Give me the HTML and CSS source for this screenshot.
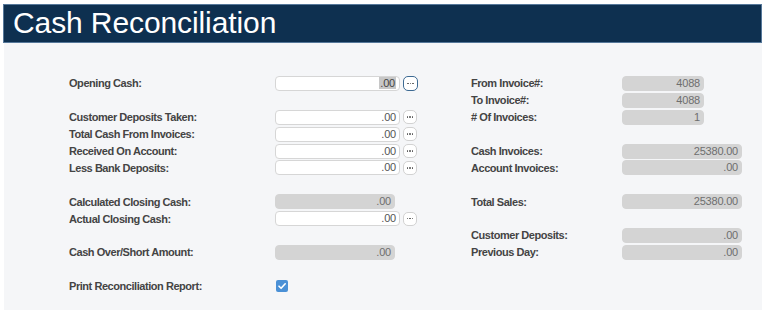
FILE: index.html
```html
<!DOCTYPE html>
<html>
<head>
<meta charset="utf-8">
<link rel="stylesheet" href="styles.css">
</head>
<body>
<div class="page">
  <header class="titlebar"><h1>Cash Reconciliation</h1></header>
  <main class="panel">
    <section class="col col-left">
      <div class="label">Opening Cash:</div>
      <div class="field input"><span class="sel">.00</span></div>
      <div class="more focus"><i></i><i></i><i></i></div>

      <div class="spacer"></div>

      <div class="label">Customer Deposits Taken:</div>
      <div class="field input">.00</div>
      <div class="more"><i></i><i></i><i></i></div>

      <div class="label">Total Cash From Invoices:</div>
      <div class="field input">.00</div>
      <div class="more"><i></i><i></i><i></i></div>

      <div class="label">Received On Account:</div>
      <div class="field input">.00</div>
      <div class="more"><i></i><i></i><i></i></div>

      <div class="label">Less Bank Deposits:</div>
      <div class="field input">.00</div>
      <div class="more"><i></i><i></i><i></i></div>

      <div class="spacer"></div>

      <div class="label">Calculated Closing Cash:</div>
      <div class="field ro short">.00</div>
      <div></div>

      <div class="label">Actual Closing Cash:</div>
      <div class="field input">.00</div>
      <div class="more"><i></i><i></i><i></i></div>

      <div class="spacer"></div>

      <div class="label">Cash Over/Short Amount:</div>
      <div class="field ro short">.00</div>
      <div></div>

      <div class="spacer"></div>

      <div class="label">Print Reconciliation Report:</div>
      <div class="checkcell">
        <span class="checkbox"><svg viewBox="0 0 12 12" width="12" height="12"><path d="M3 6.2 L5.1 8.3 L9.2 3.8" fill="none" stroke="#fff" stroke-width="1.6" stroke-linecap="round" stroke-linejoin="round"/></svg></span>
      </div>
      <div></div>
    </section>

    <section class="col col-right">
      <div class="label">From Invoice#:</div>
      <div class="field ro narrow">4088</div>

      <div class="label">To Invoice#:</div>
      <div class="field ro narrow">4088</div>

      <div class="label"># Of Invoices:</div>
      <div class="field ro narrow">1</div>

      <div class="spacer"></div>

      <div class="label">Cash Invoices:</div>
      <div class="field ro">25380.00</div>

      <div class="label">Account Invoices:</div>
      <div class="field ro">.00</div>

      <div class="spacer"></div>

      <div class="label">Total Sales:</div>
      <div class="field ro">25380.00</div>

      <div class="spacer"></div>

      <div class="label">Customer Deposits:</div>
      <div class="field ro">.00</div>

      <div class="label">Previous Day:</div>
      <div class="field ro">.00</div>
    </section>
  </main>
</div>
</body>
</html>
```

FILE: styles.css
```css
* { box-sizing: border-box; }

html, body {
  margin: 0;
  padding: 0;
  background: #ffffff;
  font-family: "Liberation Sans", Arial, sans-serif;
}

.page {
  padding: 4px 6px 0 3px;
}

.titlebar {
  height: 39px;
  background: #0e3050;
  border: 1px solid #56789a;
  display: flex;
  align-items: center;
  padding-left: 9px;
}

.titlebar h1 {
  margin: 0;
  color: #ffffff;
  font-weight: normal;
  font-size: 30px;
  line-height: 30px;
  letter-spacing: -0.1px;
  padding-bottom: 1px;
}

.panel {
  margin-left: 1px;
  height: 267px;
  background: #f5f6f8;
  padding: 32px 0 0 65px;
  display: flex;
  align-items: flex-start;
}

.col {
  display: grid;
  grid-auto-rows: 16.9px;
  align-items: center;
}

.col-left {
  grid-template-columns: 206px 125px 17px;
  width: 402px;
}

.col-right {
  grid-template-columns: 151px 120px;
}

.spacer {
  grid-column: 1 / -1;
}

.label {
  font-weight: bold;
  font-size: 11px;
  letter-spacing: -0.45px;
  color: #444444;
  white-space: nowrap;
}

.field {
  height: 15px;
  border-radius: 4px;
  font-size: 11px;
  letter-spacing: -0.2px;
  line-height: 13px;
  text-align: right;
  padding-right: 3px;
  white-space: nowrap;
}

.input {
  background: #ffffff;
  border: 1px solid #d6d6d6;
  color: #555555;
}

.ro {
  background: #d4d4d4;
  border: 1px solid #d4d4d4;
  color: #6e6e6e;
}

.ro.short { width: 120px; }
.ro.narrow { width: 82px; }

.sel {
  background: #c7c7c7;
  color: #444;
  padding: 0 1px;
}

.more {
  margin-left: 3px;
  width: 14px;
  height: 14px;
  border-radius: 5px;
  background: #ffffff;
  border: 1px solid #d2d2d2;
  display: flex;
  align-items: center;
  justify-content: center;
  gap: 1px;
}

.more i {
  display: block;
  width: 1.5px;
  height: 1.5px;
  background: #555;
  border-radius: 1px;
}

.more.focus {
  border: 1.5px solid #3d6a93;
  height: 15px;
  width: 15px;
}

.checkcell {
  display: flex;
  align-items: center;
  padding-left: 1px;
}

.checkbox {
  width: 12px;
  height: 12px;
  border-radius: 2px;
  background: #4a90d6;
  display: flex;
}
```
